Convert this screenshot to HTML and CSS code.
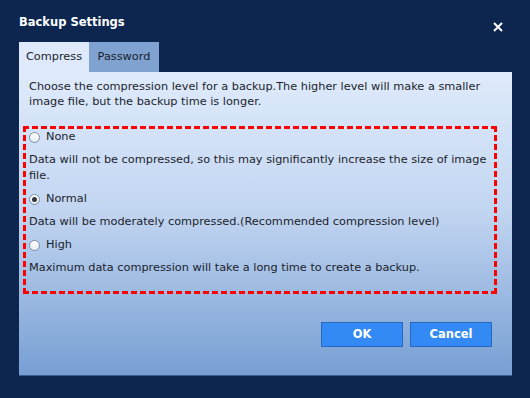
FILE: index.html
```html
<!DOCTYPE html>
<html>
<head lang="en">
    <meta charset="UTF-8">
    <title>Backup Settings</title>
    <link rel="stylesheet" href="styles.css">
</head>
<body>
<div id="dialog">
    <div class="titlebar">
        <span class="title">Backup Settings</span>
        <span class="close">
            <svg width="10" height="10" viewBox="0 0 10 10">
                <path d="M1 1L9 9M9 1L1 9" stroke="#ffffff" stroke-width="2"/>
            </svg>
        </span>
    </div>
    <ul class="tabs">
        <li class="selected">Compress</li>
        <li>Password</li>
    </ul>
    <div class="panel">
        <p class="intro">Choose the compression level for a backup.The higher level will make a smaller image file, but the backup time is longer.</p>
        <div class="options">
            <div class="option"><span class="radio"></span>None</div>
            <p class="desc">Data will not be compressed, so this may significantly increase the size of image file.</p>
            <div class="option"><span class="radio checked"></span>Normal</div>
            <p class="desc">Data will be moderately compressed.(Recommended compression level)</p>
            <div class="option"><span class="radio"></span>High</div>
            <p class="desc">Maximum data compression will take a long time to create a backup.</p>
        </div>
        <div class="buttons">
            <span class="btn">OK</span>
            <span class="btn">Cancel</span>
        </div>
    </div>
</div>
</body>
</html>
```

FILE: styles.css
```css
*{
    margin: 0;
    padding: 0;
}
ul{
    list-style: none;
}
body{
    background: #0c2650;
    font-family: "DejaVu Sans", Verdana, sans-serif;
    font-size: 11.3px;
    color: #1b1e2c;
}
#dialog{
    width: 530px;
    height: 398px;
}
.titlebar{
    height: 42px;
    display: flex;
    align-items: center;
    justify-content: space-between;
    padding: 0 27px 0 19px;
    box-sizing: border-box;
}
.title{
    color: #ffffff;
    font-weight: bold;
    font-size: 11.5px;
    margin-top: 1px;
}
.close{
    display: flex;
    margin-top: 12px;
}
.tabs{
    display: flex;
    margin-left: 19px;
}
.tabs li{
    width: 70px;
    height: 30px;
    line-height: 30px;
    text-align: center;
    background: #7fa2d0;
}
.tabs li.selected{
    background: #deeafb;
}
.panel{
    margin: 0 18px 0 19px;
    height: 303px;
    border-bottom: 1px solid #3c5c8c;
    background: linear-gradient(#dfebfc, #c3d6f1 45%, #779fd3);
    display: flex;
    flex-direction: column;
}
.intro{
    padding: 7px 10px 0 10px;
    line-height: 15px;
}
.options{
    margin: 17px 15px 0 4px;
    border: 3px dashed #ff0000;
    padding: 0 0 15px 3px;
    display: flex;
    flex-direction: column;
    gap: 7px;
    line-height: 16px;
}
.option{
    display: flex;
    align-items: center;
}
.radio{
    width: 11px;
    height: 11px;
    border: 1px solid #7d8ea5;
    border-radius: 50%;
    background: linear-gradient(#ffffff, #e6ebf1);
    box-sizing: border-box;
    margin-right: 6px;
    position: relative;
}
.radio.checked::after{
    content: "";
    position: absolute;
    left: 2px;
    top: 2px;
    width: 5px;
    height: 5px;
    border-radius: 50%;
    background: #33363d;
}
.buttons{
    display: flex;
    justify-content: flex-end;
    gap: 7px;
    margin-top: auto;
    padding: 0 20px 28px 0;
}
.btn{
    width: 82px;
    height: 25px;
    line-height: 23px;
    box-sizing: border-box;
    text-align: center;
    background: #348af4;
    border: 1px solid #2667c2;
    color: #ffffff;
    font-weight: bold;
    font-size: 11.5px;
}
```
